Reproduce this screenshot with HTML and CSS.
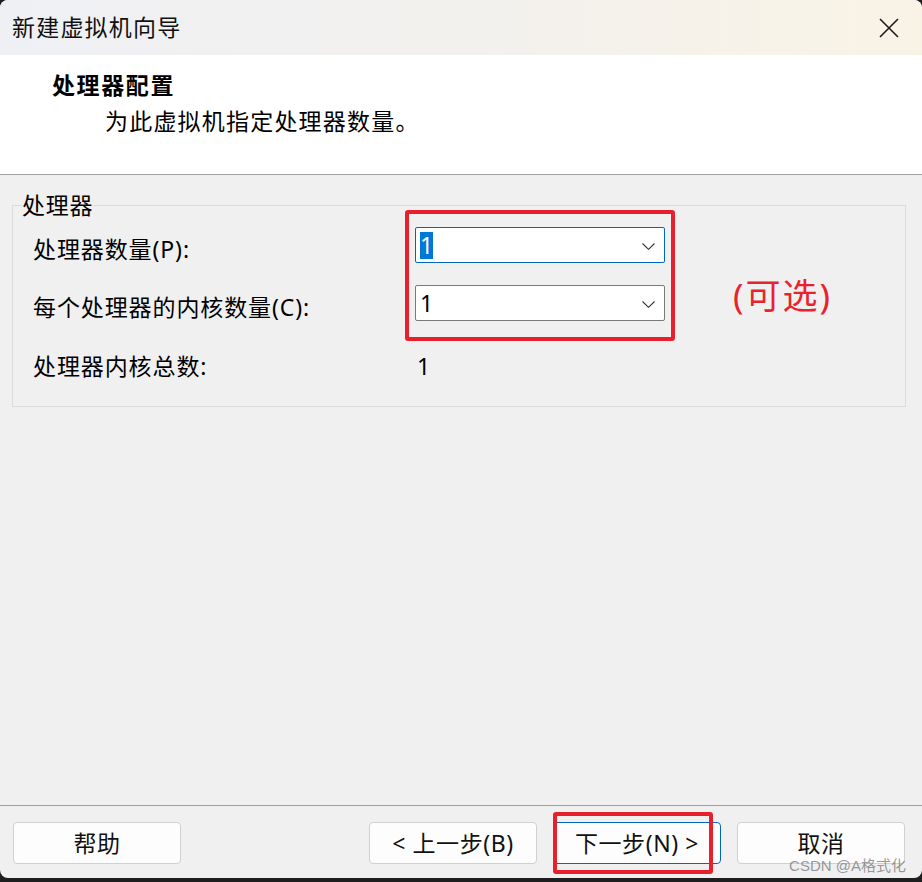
FILE: index.html
```html
<!DOCTYPE html>
<html lang="zh-CN">
<head>
<meta charset="utf-8">
<title>新建虚拟机向导</title>
<link rel="stylesheet" href="styles.css">
</head>
<body>
<div class="window">
  <div class="titlebar">
    <span class="title">新建虚拟机向导</span>
    <span class="close" aria-label="关闭">
      <svg width="20" height="20" viewBox="0 0 20 20"><path d="M1 1 L19 19 M19 1 L1 19" stroke="#1a1a1a" stroke-width="1.6" fill="none"/></svg>
    </span>
  </div>
  <div class="header">
    <div class="h-title">处理器配置</div>
    <div class="h-sub">为此虚拟机指定处理器数量。</div>
  </div>
  <div class="content">
    <fieldset class="group">
      <legend>处理器</legend>
      <div class="grid">
        <div class="label">处理器数量(P):</div>
        <div class="combo focused">
          <span class="sel">1</span>
          <svg class="chev" width="13" height="7" viewBox="0 0 13 7"><path d="M0.5 0.5 L6.5 6.3 L12.5 0.5" stroke="#333" stroke-width="1.1" fill="none"/></svg>
        </div>
        <div class="optional">(可选)</div>
        <div class="label">每个处理器的内核数量(C):</div>
        <div class="combo">
          <span class="val">1</span>
          <svg class="chev" width="13" height="7" viewBox="0 0 13 7"><path d="M0.5 0.5 L6.5 6.3 L12.5 0.5" stroke="#333" stroke-width="1.1" fill="none"/></svg>
        </div>
        <div class="label row3">处理器内核总数:</div>
        <div class="total row3">1</div>
        <div class="annot annot-combos"></div>
      </div>
    </fieldset>
  </div>
  <div class="footer">
    <button class="btn">帮助</button>
    <div class="nav">
      <button class="btn">&lt; 上一步(B)</button>
      <div class="next-wrap">
        <button class="btn primary">下一步(N) &gt;</button>
        <div class="annot annot-next"></div>
      </div>
      <button class="btn">取消</button>
    </div>
  </div>
  <div class="watermark">CSDN @A格式化</div>
</div>
</body>
</html>
```

FILE: styles.css
```css
html, body {
  margin: 0;
  padding: 0;
}
body {
  background: #1e1e1e;
  width: 922px;
  height: 882px;
  overflow: hidden;
  font-family: "Noto Sans", "Noto Sans CJK SC", sans-serif;
  color: #000;
}
.window {
  position: relative;
  width: 922px;
  height: 878px;
  background: #f0f0f0;
  border-radius: 8px;
  overflow: hidden;
  display: flex;
  flex-direction: column;
}
.titlebar {
  height: 55px;
  flex: none;
  display: flex;
  align-items: center;
  justify-content: space-between;
  padding: 0 23px 0 12px;
  background: linear-gradient(90deg, #eff0f4 0%, #f3f1ee 50%, #f9f3e6 100%);
}
.title {
  font-size: 23px;
  line-height: 30px;
  letter-spacing: 1.2px;
  color: #111;
  margin-top: -1px;
}
.close {
  display: flex;
  width: 20px;
  height: 20px;
}
.header {
  flex: none;
  box-sizing: border-box;
  height: 120px;
  background: #fff;
  border-bottom: 1px solid #a0a0a0;
  padding: 15px 0 0 52px;
}
.h-title {
  font-size: 23px;
  line-height: 30px;
  font-weight: bold;
  letter-spacing: 1.6px;
}
.h-sub {
  font-size: 23px;
  line-height: 30px;
  letter-spacing: 1.2px;
  margin: 6px 0 0 53px;
}
.content {
  flex: 1;
  padding: 17px 16px 0 12px;
}
.group {
  margin: 0;
  padding: 9px 0 22px 0;
  border: 1px solid #dcdcdc;
  min-width: 0;
}
.group legend {
  font-size: 23px;
  line-height: 26px;
  letter-spacing: 0.8px;
  padding: 0;
  margin-left: 9px;
}
.grid {
  position: relative;
  display: grid;
  grid-template-columns: 382px 250px 1fr;
  grid-template-rows: 36px 36px 41px;
  row-gap: 22px;
  padding-left: 20px;
}
.label {
  font-size: 23px;
  line-height: 30px;
  letter-spacing: 0.9px;
  align-self: center;
  padding-top: 8px;
  white-space: nowrap;
}
.label.row3 {
  padding-top: 4px;
}
.combo {
  box-sizing: border-box;
  height: 36px;
  background: #fff;
  border: 1px solid #7a7a7a;
  border-radius: 2px;
  display: flex;
  align-items: center;
  justify-content: space-between;
  padding: 0 9px 0 4px;
  font-size: 23px;
}
.combo.focused {
  border-color: #0067c0;
}
.sel {
  display: inline-flex;
  align-items: center;
  justify-content: center;
  width: 13px;
  height: 27px;
  background: #0078d7;
  color: #fff;
  line-height: 27px;
}
.val {
  line-height: 27px;
}
.chev {
  margin-top: 2px;
}
.optional {
  grid-column: 3;
  grid-row: 1 / 3;
  align-self: end;
  margin: 0 0 5px 68px;
  font-size: 35px;
  line-height: 40px;
  letter-spacing: 2px;
  color: #e8232d;
  white-space: nowrap;
}
.total {
  font-size: 23px;
  line-height: 30px;
  align-self: center;
  padding: 4px 0 0 2px;
}
.annot {
  position: absolute;
  box-sizing: border-box;
  border: 4px solid #e8202c;
  border-radius: 3px;
  pointer-events: none;
}
.annot-combos {
  left: 392px;
  top: -17px;
  width: 270px;
  height: 131px;
}
.footer {
  flex: none;
  height: 73px;
  box-sizing: border-box;
  border-top: 1px solid #a0a0a0;
  padding: 16px 17px 0 13px;
  display: flex;
  justify-content: space-between;
  align-items: flex-start;
}
.nav {
  display: flex;
  gap: 16px;
}
.next-wrap {
  position: relative;
  display: flex;
}
.btn {
  box-sizing: border-box;
  width: 168px;
  height: 42px;
  background: #fdfdfd;
  border: 1px solid #d0d0d0;
  border-radius: 4px;
  font-family: "Noto Sans", "Noto Sans CJK SC", sans-serif;
  font-size: 23px;
  letter-spacing: 0.6px;
  color: #111;
  padding: 0;
  line-height: 40px;
}
.btn.primary {
  border-color: #0067c0;
}
.annot-next {
  left: 0;
  top: -10px;
  width: 160px;
  height: 62px;
}
.watermark {
  position: absolute;
  right: 16px;
  bottom: 2px;
  font-family: "Liberation Sans", "Noto Sans CJK SC", sans-serif;
  font-size: 15px;
  line-height: 20px;
  color: rgba(120, 120, 120, 0.75);
}
```
